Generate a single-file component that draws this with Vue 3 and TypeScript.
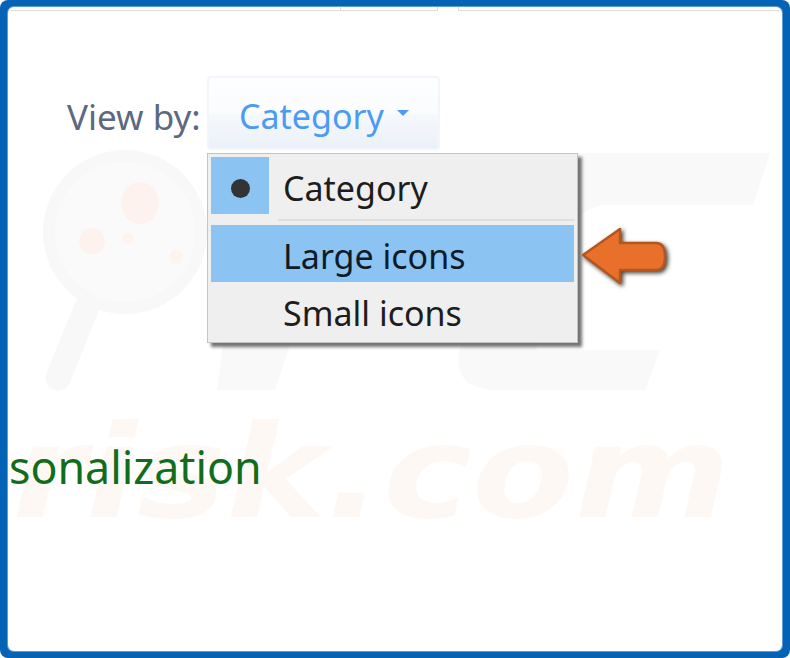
<script setup lang="ts">
const items = [
  { label: 'Category', checked: true, active: false },
  { label: 'Large icons', checked: false, active: true },
  { label: 'Small icons', checked: false, active: false }
]
</script>

<template>
  <div class="frame">
    <div class="inner">
      <!-- faint site watermark behind everything -->
      <div class="watermark">
        <svg class="wm-logo" width="774" height="400" viewBox="0 0 774 400">
          <circle cx="117" cy="225" r="76" fill="#fafafa" stroke="#f8f8f8" stroke-width="12" />
          <path d="M78 302 L50 371" stroke="#f8f8f8" stroke-width="25" stroke-linecap="round" />
          <ellipse cx="132" cy="196" rx="19" ry="21" fill="#fdf2ee" />
          <circle cx="84" cy="234" r="13" fill="#fdf2ee" />
          <circle cx="120" cy="232" r="6" fill="#fdf4f0" />
          <circle cx="168" cy="250" r="7" fill="#fdf4f0" />
          <path d="M240 146 H490 Q535 146 520 190 L498 262 Q486 296 445 296 H296 L267 383 H209 Z" fill="#f9f9f9" />
          <path d="M570 146 H762 L745 198 H600 Q572 198 562 228 L528 343 H652 L637 383 H490 Q442 383 452 340 L510 190 Q525 146 570 146 Z" fill="#f9f9f9" />
        </svg>
        <span class="wm-text">risk.com</span>
      </div>

      <div class="tabs">
        <span class="tab-line first"></span>
        <span class="tab-line second"></span>
        <span class="tab-gap"></span>
        <span class="tab-line third"></span>
      </div>

      <div class="view-row">
        <span class="view-label">View by:</span>
        <button class="view-button" type="button">
          Category
          <span class="caret"></span>
        </button>
      </div>

      <div class="menu-row">
        <div class="menu">
          <template v-for="item in items" :key="item.label">
            <div class="menu-item" :class="{ active: item.active }">
              <span class="check" :class="{ on: item.checked }">
                <i v-if="item.checked" class="dot"></i>
              </span>
              <span class="menu-label">{{ item.label }}</span>
            </div>
            <div v-if="item.checked" class="menu-sep"></div>
          </template>
        </div>
        <svg class="arrow" width="90" height="62" viewBox="0 0 90 62">
          <path
            d="M1 28 L38 2 L38 16 L74 16 Q83 16 83 29.5 Q83 43 74 43 L38 43 L38 56 Z"
            fill="#e8702b"
            stroke="#b4561f"
            stroke-width="2.5"
            stroke-linejoin="round"
          />
        </svg>
      </div>

      <div class="group-title">sonalization</div>
    </div>
  </div>
</template>

<style scoped>
.frame {
  box-sizing: border-box;
  width: 790px;
  height: 658px;
  padding: 7px 8px;
  border-radius: 8px;
  background: #0563b5;
  font-family: 'Noto Sans', 'Open Sans', sans-serif;
}

.inner {
  position: relative;
  height: 100%;
  border-radius: 6px;
  background: #fff;
  box-shadow: 0 0 0 1px #5f9bd2;
  overflow: hidden;
}

.watermark {
  position: absolute;
  inset: 0;
  pointer-events: none;
}

.wm-logo {
  position: absolute;
  left: 0;
  top: 0;
}

.wm-text {
  position: absolute;
  left: 4px;
  top: 402px;
  font-family: 'DejaVu Sans', sans-serif;
  font-size: 128px;
  font-weight: 700;
  font-style: italic;
  line-height: 1;
  white-space: nowrap;
  color: #fef8f5;
  transform: scaleX(1.17);
  transform-origin: left top;
}

.tabs {
  position: relative;
  display: flex;
  height: 4px;
  padding: 0 2px;
}

.tab-line {
  box-sizing: border-box;
  border-bottom: 1px solid #dcdcdc;
}

.first {
  width: 330px;
}

.second {
  width: 98px;
  border-left: 1px solid #dcdcdc;
  border-right: 1px solid #dcdcdc;
}

.tab-gap {
  width: 20px;
}

.third {
  flex: 1;
  border-left: 1px solid #dcdcdc;
}

.view-row {
  position: relative;
  display: flex;
  align-items: stretch;
  height: 74px;
  margin: 65px 0 0 59px;
}

.view-label {
  align-self: center;
  width: 140px;
  padding-top: 6px;
  font-size: 35px;
  color: #5c6980;
  white-space: nowrap;
}

.view-button {
  display: flex;
  align-items: center;
  box-sizing: border-box;
  width: 233px;
  padding: 5px 0 0 30px;
  border: 2px solid #f2f5f9;
  border-radius: 4px;
  background: linear-gradient(#fdfeff 0%, #fbfcfe 48%, #f5f8fc 54%, #ebf1f9 100%);
  font-family: inherit;
  font-size: 34px;
  color: #4b9bf0;
}

.caret {
  margin: 0 0 5px 13px;
  border-left: 6px solid transparent;
  border-right: 6px solid transparent;
  border-top: 6px solid #4b9bf0;
}

.menu-row {
  position: relative;
  display: flex;
  align-items: flex-start;
  margin: 3px 0 0 199px;
}

.menu {
  box-sizing: border-box;
  width: 371px;
  height: 190px;
  padding: 3px;
  border: 1px solid #c4c4c4;
  background: rgba(238, 238, 238, 0.93);
  box-shadow: 4px 4px 3px rgba(70, 70, 70, 0.75);
}

.menu-item {
  display: flex;
  align-items: center;
  height: 57px;
  font-size: 34px;
  color: #1d1d1d;
}

.menu-item.active {
  background: #8bc3f3;
  color: #0f1a28;
}

.check {
  display: flex;
  align-items: center;
  justify-content: center;
  flex: none;
  width: 58px;
  height: 57px;
  margin-right: 14px;
}

.check.on {
  background: #8bc3f3;
}

.dot {
  width: 19px;
  height: 19px;
  margin-top: 6px;
  border-radius: 50%;
  background: #333;
}

.menu-label {
  padding-top: 4px;
  white-space: nowrap;
}

.menu-sep {
  height: 2px;
  margin: 5px 0 4px 67px;
  background: #dedede;
}

.arrow {
  margin: 74px 0 0 4px;
  filter: drop-shadow(2px 2px 2px rgba(40, 30, 20, 0.85));
}

.group-title {
  position: relative;
  margin: 93px 0 0 1px;
  font-size: 44.7px;
  line-height: 62px;
  color: #106d1c;
  white-space: nowrap;
}
</style>
